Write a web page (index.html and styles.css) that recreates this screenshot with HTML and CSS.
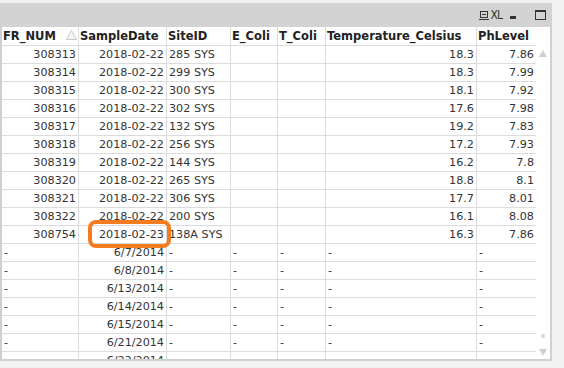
FILE: index.html
```html
<!DOCTYPE html>
<html>
<head>
<meta charset="utf-8">
<link rel="stylesheet" href="styles.css">
</head>
<body>
<div class="window">
  <div class="caption">
    <svg class="ic-print" width="10" height="9" viewBox="0 0 10 9"><rect x="1.5" y="0.5" width="7" height="6" fill="none" stroke="#333" stroke-width="1"/><line x1="3" y1="3.5" x2="7" y2="3.5" stroke="#333"/><line x1="0" y1="8.5" x2="10" y2="8.5" stroke="#333"/></svg>
    <span class="ic-xl">XL</span>
    <span class="ic-min"></span>
    <span class="ic-max"></span>
  </div>
  <div class="body">
    <div class="grid">
      <div class="h sortcol">FR_NUM<svg class="sort" width="11" height="10" viewBox="0 0 11 10"><polygon points="5.5,0.5 10.5,9.5 0.5,9.5" fill="#f4f4f4" stroke="#c8c8c8" stroke-width="1"/></svg></div>
      <div class="h">SampleDate</div>
      <div class="h">SiteID</div>
      <div class="h">E_Coli</div>
      <div class="h">T_Coli</div>
      <div class="h">Temperature_Celsius</div>
      <div class="h last">PhLevel</div>

      <div class="c r">308313</div><div class="c r">2018-02-22</div><div class="c">285 SYS</div><div class="c"></div><div class="c"></div><div class="c r">18.3</div><div class="c r last">7.86</div>
      <div class="c r">308314</div><div class="c r">2018-02-22</div><div class="c">299 SYS</div><div class="c"></div><div class="c"></div><div class="c r">18.3</div><div class="c r last">7.99</div>
      <div class="c r">308315</div><div class="c r">2018-02-22</div><div class="c">300 SYS</div><div class="c"></div><div class="c"></div><div class="c r">18.1</div><div class="c r last">7.92</div>
      <div class="c r">308316</div><div class="c r">2018-02-22</div><div class="c">302 SYS</div><div class="c"></div><div class="c"></div><div class="c r">17.6</div><div class="c r last">7.98</div>
      <div class="c r">308317</div><div class="c r">2018-02-22</div><div class="c">132 SYS</div><div class="c"></div><div class="c"></div><div class="c r">19.2</div><div class="c r last">7.83</div>
      <div class="c r">308318</div><div class="c r">2018-02-22</div><div class="c">256 SYS</div><div class="c"></div><div class="c"></div><div class="c r">17.2</div><div class="c r last">7.93</div>
      <div class="c r">308319</div><div class="c r">2018-02-22</div><div class="c">144 SYS</div><div class="c"></div><div class="c"></div><div class="c r">16.2</div><div class="c r last">7.8</div>
      <div class="c r">308320</div><div class="c r">2018-02-22</div><div class="c">265 SYS</div><div class="c"></div><div class="c"></div><div class="c r">18.8</div><div class="c r last">8.1</div>
      <div class="c r">308321</div><div class="c r">2018-02-22</div><div class="c">306 SYS</div><div class="c"></div><div class="c"></div><div class="c r">17.7</div><div class="c r last">8.01</div>
      <div class="c r">308322</div><div class="c r">2018-02-22</div><div class="c">200 SYS</div><div class="c"></div><div class="c"></div><div class="c r">16.1</div><div class="c r last">8.08</div>
      <div class="c r">308754</div><div class="c r">2018-02-23</div><div class="c">138A SYS</div><div class="c"></div><div class="c"></div><div class="c r">16.3</div><div class="c r last">7.86</div>

      <div class="c">-</div><div class="c r">6/7/2014</div><div class="c">-</div><div class="c">-</div><div class="c">-</div><div class="c">-</div><div class="c last">-</div>
      <div class="c">-</div><div class="c r">6/8/2014</div><div class="c">-</div><div class="c">-</div><div class="c">-</div><div class="c">-</div><div class="c last">-</div>
      <div class="c">-</div><div class="c r">6/13/2014</div><div class="c">-</div><div class="c">-</div><div class="c">-</div><div class="c">-</div><div class="c last">-</div>
      <div class="c">-</div><div class="c r">6/14/2014</div><div class="c">-</div><div class="c">-</div><div class="c">-</div><div class="c">-</div><div class="c last">-</div>
      <div class="c">-</div><div class="c r">6/15/2014</div><div class="c">-</div><div class="c">-</div><div class="c">-</div><div class="c">-</div><div class="c last">-</div>
      <div class="c">-</div><div class="c r">6/21/2014</div><div class="c">-</div><div class="c">-</div><div class="c">-</div><div class="c">-</div><div class="c last">-</div>
      <div class="c">-</div><div class="c r">6/22/2014</div><div class="c">-</div><div class="c">-</div><div class="c">-</div><div class="c">-</div><div class="c last">-</div>
    </div>
    <div class="scroll">
      <span class="up"></span>
      <span class="dot"></span>
      <span class="down"></span>
    </div>
    <div class="highlight"></div>
  </div>
</div>
</body>
</html>
```
FILE: styles.css
```css
html, body {
  margin: 0;
  padding: 0;
  background: #f2f2f2;
}
body {
  padding-top: 3px;
  font-family: "DejaVu Sans", Verdana, sans-serif;
  color: #333;
}
.window {
  width: 552px;
  height: 358px;
  display: flex;
  flex-direction: column;
}
.caption {
  height: 24px;
  flex: none;
  background: #d3d3d3;
  display: flex;
  align-items: center;
  justify-content: flex-end;
  padding-right: 6px;
  box-sizing: border-box;
}
.ic-print { display: block; margin-top: 1px; }
.ic-xl {
  font-family: "DejaVu Sans Condensed", "DejaVu Sans", sans-serif;
  font-size: 12px;
  color: #333;
  display: block;
  margin-left: 2px;
  letter-spacing: -1px;
  line-height: 12px;
}
.ic-min {
  display: block;
  width: 6px;
  height: 3px;
  background: #333;
  margin-left: 8px;
  margin-top: 5px;
}
.ic-max {
  display: block;
  width: 11px;
  height: 10px;
  box-sizing: border-box;
  border: 1px solid #333;
  border-top-width: 2px;
  margin-left: 19px;
}
.body {
  flex: 1;
  position: relative;
  display: flex;
  background: #fff;
  border-left: 2px solid #d0d0d0;
  border-right: 2px solid #d0d0d0;
  border-bottom: 2px solid #d0d0d0;
  overflow: hidden;
}
.grid {
  display: grid;
  grid-template-columns: 77px 88px 64px 47px 48px 151px 59px;
  grid-auto-rows: 18px;
  grid-template-rows: 19px;
  align-content: start;
  width: 534px;
  flex: none;
}
.h, .c {
  box-sizing: border-box;
  border-right: 1px solid #dcdcdc;
  border-bottom: 1px solid #dcdcdc;
  white-space: nowrap;
  overflow: hidden;
  display: flex;
  align-items: center;
}
.h {
  font-weight: bold;
  font-size: 11.5px;
  color: #222;
  padding-left: 1px;
}
.c {
  font-size: 11.2px;
  padding: 0 2px;
}
.c.r { justify-content: flex-end; }
.last { border-right: none; }
.sortcol { justify-content: space-between; padding-right: 1px; }
.sort { display: block; margin-top: -2px; }
.scroll {
  flex: 1;
  display: flex;
  flex-direction: column;
  align-items: center;
  padding-top: 23px;
  padding-bottom: 3px;
  box-sizing: border-box;
}
.up {
  width: 0; height: 0;
  border-left: 4px solid transparent;
  border-right: 4px solid transparent;
  border-bottom: 7px solid #cfcfcf;
}
.dot {
  margin-top: auto;
  width: 4px;
  height: 4px;
  border-radius: 50%;
  background: #d6d6d6;
  margin-bottom: 11px;
}
.down {
  width: 0; height: 0;
  border-left: 4px solid transparent;
  border-right: 4px solid transparent;
  border-top: 7px solid #cfcfcf;
}
.highlight {
  position: absolute;
  left: 86px;
  top: 193px;
  width: 83px;
  height: 28px;
  box-sizing: border-box;
  border: 4px solid #f47b20;
  border-radius: 8px;
}
```
